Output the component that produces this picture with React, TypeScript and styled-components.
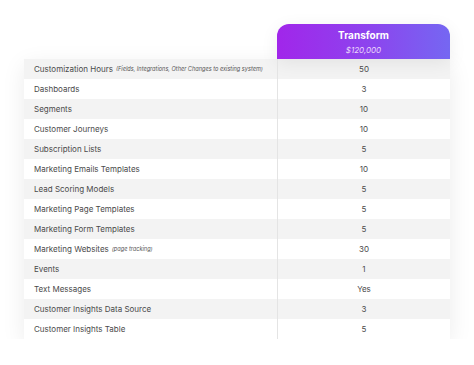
import React from 'react'
import styled, { createGlobalStyle } from 'styled-components'

const Global = createGlobalStyle`
  html, body { margin: 0; padding: 0; background: #ffffff; }
  body { font-family: Inter, "Noto Sans", sans-serif; }
`

const Page = styled.div`
  padding: 24px 24px 0 24px;
  width: 426px;
`

const HeaderRow = styled.div`
  display: grid;
  grid-template-columns: 253px 173px;
  height: 35px;
`

const PlanCard = styled.div`
  grid-column: 2;
  border-radius: 12px 12px 0 0;
  background: linear-gradient(90deg, #a126ea 0%, #8c45ee 55%, #7567f2 100%);
  box-shadow: 0 4px 18px rgba(0, 0, 0, 0.07);
  display: flex;
  flex-direction: column;
  align-items: center;
  justify-content: center;
  gap: 5px;
  padding-top: 1px;
  color: #ffffff;
`

const PlanName = styled.div`
  font-weight: 700;
  font-size: 10px;
  line-height: 11px;
`

const PlanPrice = styled.div`
  font-style: italic;
  font-size: 8px;
  line-height: 9px;
  color: #ead9fb;
`

const Table = styled.div`
  box-shadow: 0 6px 22px rgba(0, 0, 0, 0.08);
`

const Row = styled.div<{ $shade: boolean }>`
  display: grid;
  grid-template-columns: 253px 173px;
  height: 20px;
  background: ${p => (p.$shade ? '#f3f3f3' : '#ffffff')};
  color: #4a4a4a;
  font-size: 8px;
`

const Label = styled.div`
  display: flex;
  align-items: center;
  padding-left: 10px;
  white-space: nowrap;
`

const Note = styled.span`
  font-style: italic;
  font-size: 5.6px;
  margin-left: 3px;
  color: #555;
`

const Value = styled.div`
  display: flex;
  align-items: center;
  justify-content: center;
  border-left: 1px solid #e4e4e4;
`

const rows: { label: string; note?: string; value: string }[] = [
  { label: 'Customization Hours', note: '(Fields, Integrations, Other Changes to existing system)', value: '50' },
  { label: 'Dashboards', value: '3' },
  { label: 'Segments', value: '10' },
  { label: 'Customer Journeys', value: '10' },
  { label: 'Subscription Lists', value: '5' },
  { label: 'Marketing Emails Templates', value: '10' },
  { label: 'Lead Scoring Models', value: '5' },
  { label: 'Marketing Page Templates', value: '5' },
  { label: 'Marketing Form Templates', value: '5' },
  { label: 'Marketing Websites', note: '(page tracking)', value: '30' },
  { label: 'Events', value: '1' },
  { label: 'Text Messages', value: 'Yes' },
  { label: 'Customer Insights Data Source', value: '3' },
  { label: 'Customer Insights Table', value: '5' },
]

const App = () => {
  return (
    <Page>
      <Global />
      <HeaderRow>
        <PlanCard>
          <PlanName>Transform</PlanName>
          <PlanPrice>$120,000</PlanPrice>
        </PlanCard>
      </HeaderRow>
      <Table>
        {rows.map((r, i) => (
          <Row key={r.label} $shade={i % 2 === 0}>
            <Label>
              {r.label}
              {r.note && <Note>{r.note}</Note>}
            </Label>
            <Value>{r.value}</Value>
          </Row>
        ))}
      </Table>
    </Page>
  )
}

export default App
